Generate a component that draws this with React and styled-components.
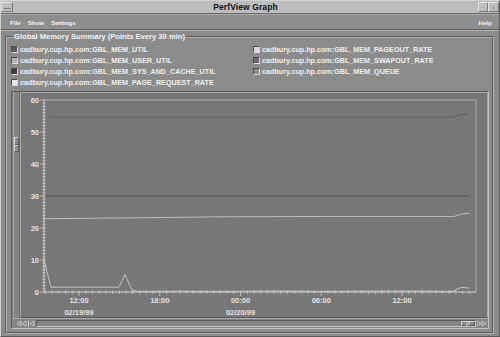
import React from "react";
import styled, { createGlobalStyle } from "styled-components";

const GlobalStyle = createGlobalStyle`
  html, body {
    margin: 0;
    padding: 0;
    background: #8c8c8c;
  }
  body {
    font-family: "Liberation Sans", Arial, sans-serif;
  }
`;

const series = [
    { name: "cadbury.cup.hp.com:GBL_MEM_UTIL", color: "#5a5a5a" },
    { name: "cadbury.cup.hp.com:GBL_MEM_USER_UTIL", color: "#b4b4b4" },
    { name: "cadbury.cup.hp.com:GBL_MEM_SYS_AND_CACHE_UTIL", color: "#3c3c3c" },
    { name: "cadbury.cup.hp.com:GBL_MEM_PAGE_REQUEST_RATE", color: "#e6e6e6" },
    { name: "cadbury.cup.hp.com:GBL_MEM_PAGEOUT_RATE", color: "#d8d8d8" },
    { name: "cadbury.cup.hp.com:GBL_MEM_SWAPOUT_RATE", color: "#6a6a6a" },
    { name: "cadbury.cup.hp.com:GBL_MEM_QUEUE", color: "#8e8e8e" },
];

// plot geometry (local to the plot frame)
const AX = 23;
const TOP = 7;
const BOTTOM = 199;
const RIGHT = 455;
const vy = (v) => BOTTOM - v * 3.2;
const HOUR6 = 80.75;
const FIRST_MAJOR = 58;

const Window = styled.div`
    width: 500px;
    height: 337px;
    box-sizing: border-box;
    display: flex;
    flex-direction: column;
    background: #8b8b8b;
    border: 1px solid;
    border-color: #d0d0d0 #5a5a5a #5a5a5a #d0d0d0;
    overflow: hidden;
`;

const TitleBar = styled.div`
    height: 12px;
    display: flex;
    align-items: center;
    background: #bdbdbd;
    border-bottom: 1px solid #6a6a6a;
`;

const TitleButton = styled.div`
    width: ${(p) => p.$w || 10}px;
    height: 10px;
    box-sizing: border-box;
    border: 1px solid;
    border-color: #e4e4e4 #7a7a7a #7a7a7a #e4e4e4;
    display: flex;
    align-items: center;
    justify-content: center;
    font-size: 7px;
    color: #444;
    line-height: 1;
`;

const Title = styled.div`
    flex: 1;
    text-align: center;
    font-size: 8.5px;
    font-weight: bold;
    color: #111;
    letter-spacing: 0.1px;
`;

const MenuBar = styled.div`
    height: 14px;
    display: flex;
    align-items: center;
    gap: 7px;
    padding: 0 7px 0 9px;
    background: #8e8e8e;
    border-top: 1px solid #a8a8a8;
    border-bottom: 2px groove #b4b4b4;
    font-size: 6.2px;
    font-weight: bold;
    color: #f4f4f4;
`;

const MenuItem = styled.span`
    margin-left: ${(p) => (p.$right ? "auto" : "0")};
`;

const Body = styled.div`
    flex: 1;
    padding: 1px 5px 2px 4px;
    display: flex;
`;

const Group = styled.fieldset`
    flex: 1;
    margin: 0;
    padding: 2px 3px 0 4px;
    border: 2px groove #b0b0b0;
    display: flex;
    flex-direction: column;
    min-width: 0;
`;

const GroupLabel = styled.legend`
    padding: 0 1px;
    margin-left: 2px;
    font-size: 7.6px;
    font-weight: bold;
    color: #f2f2f2;
    line-height: 10px;
`;

const LegendGrid = styled.div`
    display: grid;
    grid-template-rows: repeat(4, 11px);
    grid-template-columns: 242px 1fr;
    grid-auto-flow: column;
`;

const LegendItem = styled.div`
    display: flex;
    align-items: center;
    gap: 2px;
    font-size: 7.2px;
    font-weight: bold;
    color: #efefef;
    white-space: nowrap;
`;

const Swatch = styled.span`
    width: 7px;
    height: 7px;
    box-sizing: border-box;
    background: ${(p) => p.$color};
    border: 1px solid;
    border-color: #4a4a4a #d8d8d8 #d8d8d8 #4a4a4a;
`;

const ChartPanel = styled.div`
    margin-top: 3px;
    height: 238px;
    box-sizing: border-box;
    display: grid;
    grid-template-columns: 8px 1fr;
    grid-template-rows: 1fr 10px;
    border: 1px solid;
    border-color: #5c5c5c #c4c4c4 #c4c4c4 #5c5c5c;
    background: #7c7c7c;
`;

const VScroll = styled.div`
    box-sizing: border-box;
    padding-top: 45px;
    border-left: 1px solid #a6a6a6;
    border-right: 1px solid #6a6a6a;
    margin-left: 1px;
    background: #848484;
`;

const VThumb = styled.div`
    height: 15px;
    box-sizing: border-box;
    border: 1px solid;
    border-color: #d0d0d0 #5a5a5a #5a5a5a #d0d0d0;
    background: #8e8e8e;
    display: flex;
    align-items: center;
    &::after {
        content: "";
        display: block;
        width: 100%;
        border-top: 1px solid #5a5a5a;
        border-bottom: 1px solid #c8c8c8;
    }
`;

const PlotFrame = styled.div`
    box-sizing: border-box;
    border: 1px solid;
    border-color: #a8a8a8 #a8a8a8 #5a5a5a #a8a8a8;
    background: #777777;
    overflow: hidden;
`;

const HScroll = styled.div`
    grid-column: 1 / span 2;
    display: flex;
    align-items: center;
    gap: 1px;
    padding: 0 1px 0 5px;
    border-top: 1px solid #a8a8a8;
    background: #848484;
`;

const HTrack = styled.div`
    flex: 1;
    height: 7px;
    box-sizing: border-box;
    border: 1px solid;
    border-color: #5a5a5a #c8c8c8 #c8c8c8 #5a5a5a;
    display: flex;
    justify-content: flex-end;
`;

const HThumb = styled.div`
    width: 14px;
    box-sizing: border-box;
    border: 1px solid;
    border-color: #d6d6d6 #555 #555 #d6d6d6;
    background: #8a8a8a;
    display: flex;
    align-items: center;
    justify-content: center;
`;

const Arrows = ({ dir = "left", count = 2, bar = false }) => {
    const w = count * 5 + (bar ? 2 : 0);
    const tri = (x) =>
        dir === "left"
            ? `M${x + 4} 1 L${x} 3.5 L${x + 4} 6 Z`
            : `M${x} 1 L${x + 4} 3.5 L${x} 6 Z`;
    return (
        <svg width={w} height="7" viewBox={`0 0 ${w} 7`}>
            {Array.from({ length: count }).map((_, i) => (
                <path key={i} d={tri(i * 5 + (bar && dir === "left" ? 2 : 0))} fill="none" stroke="#d8d8d8" strokeWidth="0.8" />
            ))}
            {bar && <line x1="0.5" y1="0.5" x2="0.5" y2="6.5" stroke="#d8d8d8" strokeWidth="1" />}
        </svg>
    );
};

const Plot = () => {
    const yTicks = [];
    for (let v = 0; v <= 60; v++) {
        const y = vy(v);
        const major = v % 10 === 0;
        yTicks.push(
            <line key={"y" + v} x1={major ? AX - 4 : AX - 1.5} x2={AX + 1.5} y1={y} y2={y} stroke="#cfcfcf" strokeWidth="0.8" />
        );
        if (major) {
            yTicks.push(
                <text key={"yl" + v} x={AX - 5} y={y + 2.6} textAnchor="end" fontSize="7.5" fontWeight="bold" fill="#e4e4e4">
                    {v}
                </text>
            );
        }
    }

    const xTicks = [];
    const step = HOUR6 / 12;
    for (let i = -5; FIRST_MAJOR + i * step <= RIGHT; i++) {
        const x = FIRST_MAJOR + i * step;
        const major = i % 12 === 0;
        xTicks.push(
            <line key={"x" + i} x1={x} x2={x} y1={BOTTOM - 1.5} y2={BOTTOM + (major ? 4 : 2)} stroke="#cfcfcf" strokeWidth="0.8" />
        );
    }

    const labels = [
        { t: "12:00", d: "02/19/99" },
        { t: "18:00" },
        { t: "00:00", d: "02/20/99" },
        { t: "06:00" },
        { t: "12:00" },
    ];

    const small = [
        [AX, vy(10)], [30, vy(1.5)], [98, vy(1.5)], [104, vy(5.4)], [111, vy(0.6)], [117, vy(0.2)],
        [160, vy(0.25)], [200, vy(0.2)], [260, vy(0.3)], [300, vy(0.2)], [340, vy(0.25)],
        [390, vy(0.3)], [432, vy(0.2)], [436, vy(0.9)], [441, vy(1.5)], [448, vy(1.2)],
    ];
    const userLine = [
        [AX, vy(22.9)], [120, vy(23.2)], [200, vy(23.5)], [300, vy(23.6)], [433, vy(23.6)], [441, vy(24.4)], [448, vy(24.6)],
    ];
    const memLine = [[28, vy(54.6)], [430, vy(54.6)], [440, vy(55.4)], [448, vy(55.6)]];
    const pts = (a) => a.map((p) => p.join(",")).join(" ");

    return (
        <svg width="466" height="225" viewBox="0 0 466 225" style={{ display: "block" }}>
            <g fontFamily='"Liberation Sans", Arial, sans-serif'>
                <polyline points={`${AX},${TOP} ${RIGHT},${TOP} ${RIGHT},${BOTTOM}`} fill="none" stroke="#b0b0b0" strokeWidth="1" />
                <line x1={AX} y1={vy(30)} x2={448} y2={vy(30)} stroke="#555" strokeWidth="1" />
                <polyline points={pts(memLine)} fill="none" stroke="#626262" strokeWidth="1" />
                <polyline points={pts(userLine)} fill="none" stroke="#bcbcbc" strokeWidth="1" />
                <polyline points={pts(small)} fill="none" stroke="#c4c4c4" strokeWidth="1" />
                <line x1={AX} y1={TOP} x2={AX} y2={BOTTOM} stroke="#d4d4d4" strokeWidth="1" />
                <line x1={AX} y1={BOTTOM} x2={RIGHT} y2={BOTTOM} stroke="#d4d4d4" strokeWidth="1" />
                {yTicks}
                {xTicks}
                {labels.map((l, i) => {
                    const x = FIRST_MAJOR + i * HOUR6;
                    return (
                        <g key={i} fontSize="7.5" fontWeight="bold" fill="#e4e4e4" textAnchor="middle">
                            <text x={x} y={BOTTOM + 11}>{l.t}</text>
                            {l.d && <text x={x} y={BOTTOM + 23}>{l.d}</text>}
                        </g>
                    );
                })}
            </g>
        </svg>
    );
};

const App = () => {
    return (
        <>
            <GlobalStyle />
            <Window>
                <TitleBar>
                    <TitleButton $w={12}>—</TitleButton>
                    <Title>PerfView Graph</Title>
                    <TitleButton>·</TitleButton>
                    <TitleButton $w={11}>▫</TitleButton>
                </TitleBar>
                <MenuBar>
                    <MenuItem>File</MenuItem>
                    <MenuItem>Show</MenuItem>
                    <MenuItem>Settings</MenuItem>
                    <MenuItem $right>Help</MenuItem>
                </MenuBar>
                <Body>
                    <Group>
                        <GroupLabel>Global Memory Summary (Points Every 30 min)</GroupLabel>
                        <LegendGrid>
                            {series.map((s) => (
                                <LegendItem key={s.name}>
                                    <Swatch $color={s.color} />
                                    {s.name}
                                </LegendItem>
                            ))}
                        </LegendGrid>
                        <ChartPanel>
                            <VScroll>
                                <VThumb />
                            </VScroll>
                            <PlotFrame>
                                <Plot />
                            </PlotFrame>
                            <HScroll>
                                <Arrows dir="left" count={2} />
                                <Arrows dir="left" count={1} bar />
                                <HTrack>
                                    <HThumb>
                                        <Arrows dir="right" count={1} />
                                    </HThumb>
                                </HTrack>
                                <Arrows dir="right" count={2} />
                            </HScroll>
                        </ChartPanel>
                    </Group>
                </Body>
            </Window>
        </>
    );
};

export default App;
